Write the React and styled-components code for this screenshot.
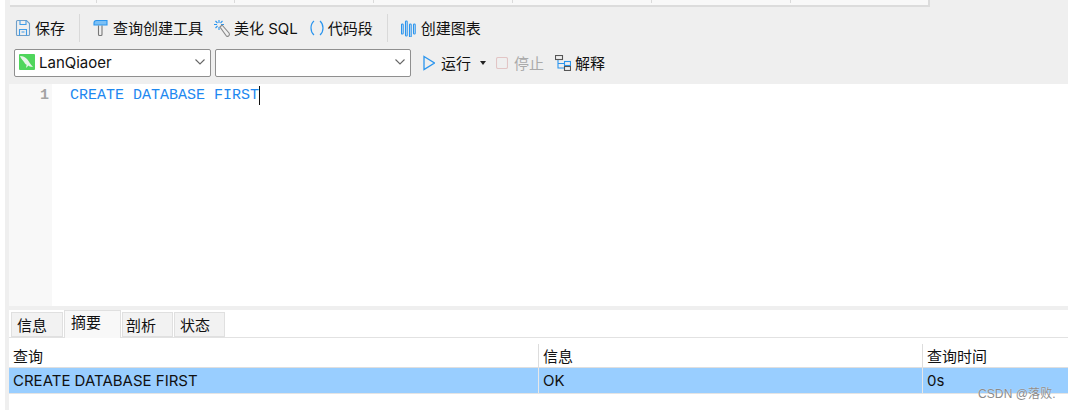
import React from "react";
import styled, { createGlobalStyle } from "styled-components";

const Global = createGlobalStyle`
  html, body { margin: 0; padding: 0; background: #fff; }
  body { font-family: Inter, "Noto Sans CJK SC", sans-serif; font-size: 15px; color: #111; }
  * { box-sizing: border-box; }
`;
const Page = styled.div`
  position: relative; width: 1070px; height: 410px; padding: 0 2px 0 5px; overflow: hidden; background: #fff;
`;
const Shell = styled.div`
  height: 410px; background: #efefef; padding-left: 4px; display: flex; flex-direction: column;
`;
const TopTabs = styled.div`
  margin-left: 1px; width: 920px; height: 7px; flex: none; display: flex; background: #f8f8f8;
  border-bottom: 2px solid #dcdcdc; border-right: 2px solid #dcdcdc;
`;
const TopTab = styled.div`
  width: ${p => p.$w}px; height: 3px; border-right: 1px solid #dadada;
`;
const Toolbar = styled.div`
  height: 42px; flex: none; display: flex; align-items: center; padding: 0 0 0 6px;
`;
const Tool = styled.div`
  display: flex; align-items: center; gap: ${p => p.$gap ?? 4}px; margin-left: ${p => p.$ml ?? 0}px;
  font-size: 15px; line-height: 20px; white-space: nowrap; color: ${p => p.$disabled ? "#aaa" : "#111"};
`;
const Label = styled.span`
  position: relative; top: 1px;
`;
const Sep = styled.div`
  width: 1px; height: 28px; background: #d9d9d9; margin-left: ${p => p.$ml}px;
`;
const SelectRow = styled.div`
  height: 28px; flex: none; display: flex; align-items: center; padding-left: 5px;
`;
const Select = styled.div`
  width: ${p => p.$w}px; height: 28px; margin-right: 4px; background: #fff; border: 1px solid #8f8f8f; border-radius: 2px;
  display: flex; align-items: center; padding: 0 5px 2px 4px; gap: 4px; font-size: 15px;
`;
const Name = styled.span` flex: 1; `;
const Editor = styled.div`
  margin-top: 7px; height: 222px; flex: none; display: flex; background: #fff;
`;
const Gutter = styled.div`
  width: 43px; background: #f8f8f8; text-align: right; padding: 2px 3px 0 0;
  font: 700 15px/19px "Liberation Mono", monospace; color: #a4a4a4;
`;
const Code = styled.div`
  margin-left: 18px; padding-top: 2px; height: 24px; font: 15px/19px "Liberation Mono", monospace; color: #1e88f0;
  position: relative;
`;
const Caret = styled.span`
  position: absolute; right: -1px; top: 2px; width: 1px; height: 19px; background: #111;
`;
const Panel = styled.div`
  margin-top: 4px; flex: 1; background: #fff; display: flex; flex-direction: column;
`;
const Tabs = styled.div`
  height: 28px; flex: none; display: flex; align-items: flex-end; padding-left: 2px; border-bottom: 1px solid #e2e2e2;
`;
const Tab = styled.div`
  width: ${p => p.$w}px; height: ${p => p.$active ? 28 : 25}px; margin-bottom: ${p => p.$active ? -1 : 0}px;
  background: ${p => p.$active ? "#f8f8f8" : "#f2f2f2"};
  border: 1px solid #e0e0e0; border-bottom: ${p => p.$active ? 0 : 1}px solid #e0e0e0;
  margin-right: 1px; font-size: 15px; line-height: ${p => p.$active ? 24 : 26}px; padding-left: ${p => p.$pl}px; position: relative; z-index: 1;
`;
const Row = styled.div`
  display: grid; grid-template-columns: 529px 1px 383px 1px 1fr; flex: none; height: ${p => p.$h}px;
  background: ${p => p.$sel ? "#99ceff" : "#fff"}; border-bottom: ${p => p.$sel ? "1px solid #e4e4e4" : "1px solid #dfdfdf"};
`;
const Cell = styled.div`
  padding: ${p => p.$top}px 0 0 4px; font-size: 15px; line-height: 20px; white-space: nowrap;
`;
const Divider = styled.div`
  background: ${p => p.$c}; margin-top: ${p => p.$mt ?? 0}px;
`;
const Mark = styled.div`
  position: absolute; left: 978px; top: 385px; font: 12px/18px "Liberation Sans", "Noto Sans CJK SC", sans-serif; color: #8b8b8b; letter-spacing: .1px;
  text-shadow: 0 0 1px rgba(255,255,255,.9);
`;

const Ico = ({ w = 16, h = 18, children }) => (
  <svg width={w} height={h} viewBox={`0 0 ${w} ${h}`} fill="none" stroke="#2b95ee" strokeWidth="1.1">{children}</svg>
);
const Chevron = () => (
  <svg width="10" height="6" viewBox="0 0 10 6" fill="none" stroke="#666" strokeWidth="1.1"><path d="M.5.5l4.500 4.500L9.500.5" /></svg>
);
const Db = () => (
  <svg width="16" height="16" viewBox="0 0 16 16">
    <rect width="16" height="16" rx="1" fill="#4fd65c" />
    <path d="M1 2c3 0 5 1 7 3 2 2 3 5 6 8-3 0-4-1-5-2-2 0-3-1-4-3C4 6 2 5 1 2z" fill="#e8f5ea" />
    <path d="M8 9l-1 5 3-3z" fill="#e8f5ea" />
  </svg>
);

export default function App() {
  return (
    <Page>
      <Global />
      <Shell>
        <TopTabs>
          <TopTab $w={87} /><TopTab $w={138} /><TopTab $w={139} /><TopTab $w={139} /><TopTab $w={139} /><TopTab $w={139} />
        </TopTabs>
        <Toolbar>
          <Tool>
            <Ico w={16} h={18}>
              <path d="M2.500 1.500h9l3 3v11a1 1 0 0 1-1 1h-11a1 1 0 0 1-1-1v-13a1 1 0 0 1 1-1z" stroke="#6f9fc9" />
              <path d="M5 1.500v4h6v-4M4.500 16.500v-6h7v6M6.500 13h3" stroke="#3f9ce8" />
            </Ico>
            <Label>保存</Label>
          </Tool>
          <Sep $ml={14} />
          <Tool $ml={13} $gap={5}>
            <Ico w={15} h={18}>
              <path d="M1 6.500V4Q1 1.500 3.500 1.500H14v4.500H1z" fill="#7cc0f5" stroke="#2b95ee" />
              <path d="M5.500 6.500v9q0 1 1 1h1.500q1 0 1-1v-9" stroke="#777" />
            </Ico>
            <Label>查询创建工具</Label>
          </Tool>
          <Tool $ml={11} $gap={4}>
            <Ico w={16} h={18}>
              <path d="M5 1v3M5 8v3M0 5.500h3M7 5.500h3M1.500 2l2 2M8.500 2l-2 2M1.500 9l2-2" />
              <path d="M6 8l2-2 7 8q1 2-.5 3t-2.500-.5z" stroke="#888" />
            </Ico>
            <Label>美化 SQL</Label>
          </Tool>
          <Tool $ml={12} $gap={4}>
            <Ico w={14} h={18}>
              <path d="M4 2Q1 4.500 1 9t3 7M10 2q3 2.500 3 7t-3 7" strokeWidth="1.2" />
            </Ico>
            <Label>代码段</Label>
          </Tool>
          <Sep $ml={14} />
          <Tool $ml={13} $gap={5}>
            <Ico w={15} h={18}>
              <rect x="0.500" y="5" width="1.700" height="10" rx=".85" />
              <rect x="4.500" y="2" width="1.700" height="15" rx=".85" />
              <rect x="8.500" y="5" width="1.700" height="13" rx=".85" />
              <rect x="12.500" y="5" width="1.700" height="10" rx=".85" />
            </Ico>
            <Label>创建图表</Label>
          </Tool>
        </Toolbar>
        <SelectRow>
          <Select $w={197}>
            <Db />
            <Name>LanQiaoer</Name>
            <Chevron />
          </Select>
          <Select $w={196}>
            <Name />
            <Chevron />
          </Select>
          <Tool $ml={8} $gap={6}>
            <Ico w={12} h={16}><path d="M1 1.500L11.500 8 1 14.500z" strokeWidth="1.3" /></Ico>
            <Label>运行</Label>
          </Tool>
          <svg width="6" height="4" viewBox="0 0 6 4" style={{ marginLeft: 9 }}><path d="M0 0h6L3 4z" fill="#222" /></svg>
          <Tool $ml={10} $gap={6} $disabled>
            <svg width="12" height="12" viewBox="0 0 12 12" fill="none" stroke="#e2c5c5" strokeWidth="1.1"><rect x=".5" y=".5" width="11" height="11" rx="1.5" /></svg>
            <Label>停止</Label>
          </Tool>
          <Tool $ml={11} $gap={4}>
            <svg width="16" height="16" viewBox="0 0 16 16" fill="none" strokeWidth="1.1">
              <rect x=".5" y=".5" width="7" height="4" stroke="#555" />
              <path d="M3 5v8h6M3 8.500h6" stroke="#2b95ee" />
              <rect x="9.500" y="6.500" width="6" height="4" stroke="#2b95ee" />
              <rect x="9.500" y="11.500" width="6" height="4" stroke="#555" />
            </svg>
            <Label>解释</Label>
          </Tool>
        </SelectRow>
        <Editor>
          <Gutter>1</Gutter>
          <Code>CREATE DATABASE FIRST<Caret /></Code>
        </Editor>
        <Panel>
          <Tabs>
            <Tab $w={52} $pl={5}>信息</Tab>
            <Tab $w={57} $pl={6} $active>摘要</Tab>
            <Tab $w={51} $pl={3}>剖析</Tab>
            <Tab $w={51} $pl={5}>状态</Tab>
          </Tabs>
          <Row $h={30}>
            <Cell $top={9}>查询</Cell><Divider $c="#ddd" $mt={6} />
            <Cell $top={9}>信息</Cell><Divider $c="#ddd" $mt={6} />
            <Cell $top={9}>查询时间</Cell>
          </Row>
          <Row $h={26} $sel>
            <Cell $top={3}>CREATE DATABASE FIRST</Cell><Divider $c="#e8e8e8" />
            <Cell $top={3}>OK</Cell><Divider $c="#e8e8e8" />
            <Cell $top={3}>0s</Cell>
          </Row>
        </Panel>
      </Shell>
      <Mark>CSDN @落败.</Mark>
    </Page>
  );
}
